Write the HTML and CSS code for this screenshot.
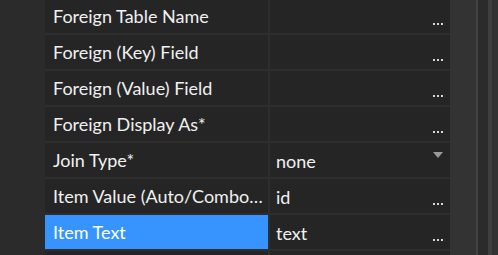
FILE: index.html
```html
<!DOCTYPE html>
<html lang="en">
<head>
    <meta charset="UTF-8">
    <title>Properties</title>
    <link rel="stylesheet" href="styles.css">
</head>
<body>
    <div class="panel">
        <div class="gutter"></div>

        <div class="grid">
            <div class="name">Foreign Table Name</div>
            <div class="value"><span class="text"></span><span class="more"></span></div>

            <div class="name">Foreign (Key) Field</div>
            <div class="value"><span class="text"></span><span class="more"></span></div>

            <div class="name">Foreign (Value) Field</div>
            <div class="value"><span class="text"></span><span class="more"></span></div>

            <div class="name">Foreign Display As*</div>
            <div class="value"><span class="text"></span><span class="more"></span></div>

            <div class="name">Join Type*</div>
            <div class="value"><span class="text">none</span><span class="drop"></span></div>

            <div class="name">Item Value (Auto/Combobox)</div>
            <div class="value"><span class="text">id</span><span class="more"></span></div>

            <div class="name selected">Item Text</div>
            <div class="value"><span class="text">text</span><span class="more"></span></div>

            <div class="name"></div>
            <div class="value"></div>
        </div>

        <div class="scroll">
            <div class="track"></div>
            <div class="rail"></div>
            <div class="edge"></div>
        </div>
    </div>
</body>
</html>
```

FILE: styles.css
```css
body {
    margin: 0;
    background: #2b2b2c;
    font-family: Lato, "Open Sans", sans-serif;
    font-size: 18px;
    color: #f1f1f1;
    overflow: hidden;
}
.panel {
    display: flex;
    height: 255px;
    overflow: hidden;
}
.gutter {
    width: 45px;
    flex: none;
    background: #2b2b2c;
}
.grid {
    width: 405px;
    flex: none;
    display: grid;
    grid-template-columns: 223px 180px;
    grid-auto-rows: 34px;
    gap: 2px;
    margin-top: -1px;
    background: #2e2e2f;
    align-self: flex-start;
}
.name, .value {
    background: #252526;
    display: flex;
    align-items: center;
    min-width: 0;
}
.name {
    padding: 1px 4px 0 8px;
    overflow: hidden;
    white-space: nowrap;
    text-overflow: ellipsis;
    display: block;
    line-height: 33px;
}
.name.selected {
    background: #3794ff;
    color: #fff;
}
.value {
    padding: 1px 7px 0 6px;
}
.value .text {
    flex: 1;
}
.more {
    width: 10px;
    height: 2px;
    margin-top: 14px;
    background: linear-gradient(90deg, #d8d8d8 0 2px, transparent 2px 4px, #d8d8d8 4px 6px, transparent 6px 8px, #d8d8d8 8px 10px);
}
.drop {
    width: 0;
    height: 0;
    margin-top: -11px;
    border-left: 5.5px solid transparent;
    border-right: 5.5px solid transparent;
    border-top: 6px solid #9a9a9a;
}
.scroll {
    flex: 1;
    display: flex;
    background: #333334;
}
.track {
    width: 26px;
    border-right: 2px solid #424244;
}
.rail {
    width: 10px;
    background: #2b2b2c;
    border-right: 4px solid #3f3f41;
}
.edge {
    flex: 1;
}
```
